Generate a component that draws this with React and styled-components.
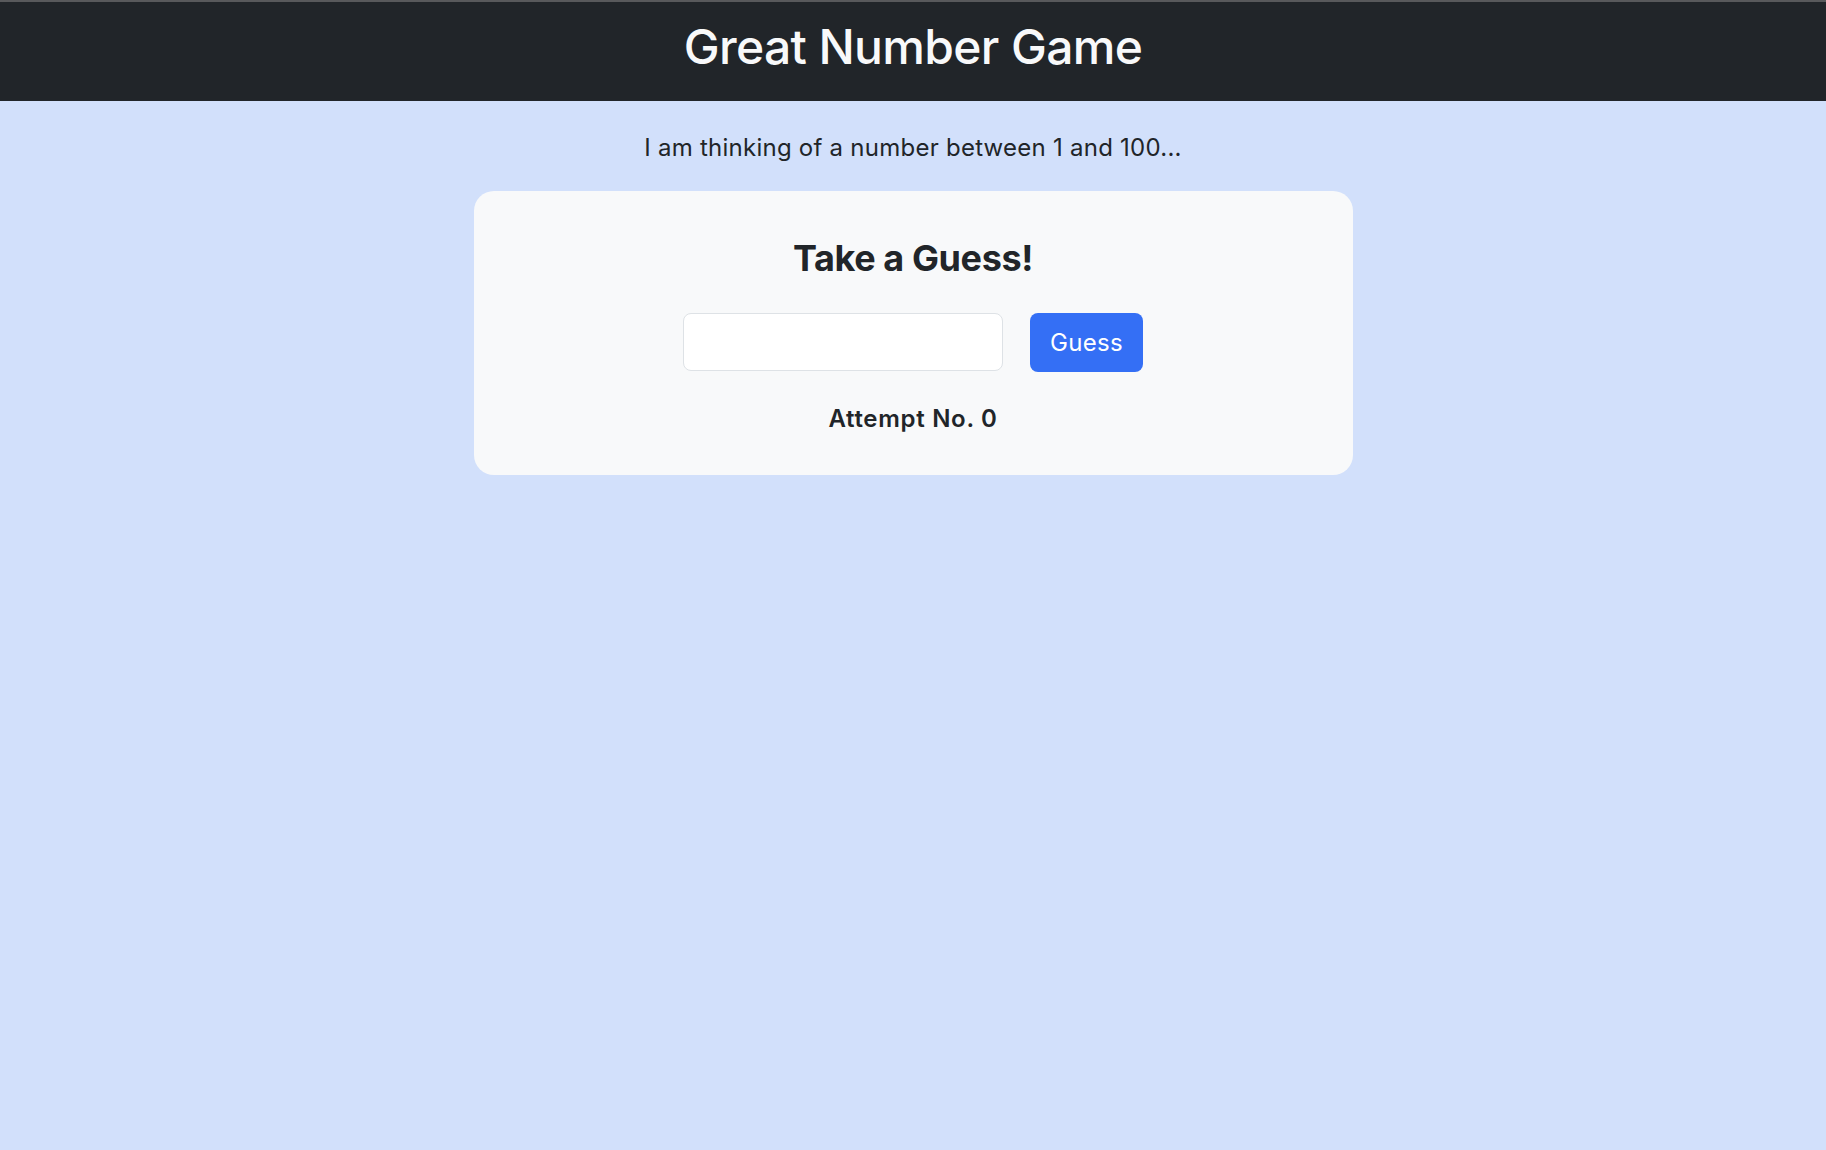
import React, { useState } from 'react'
import styled, { createGlobalStyle } from 'styled-components'

const GlobalStyle = createGlobalStyle`
  html, body {
    margin: 0;
    padding: 0;
    background: #d2e0fb;
    font-family: Inter, "Noto Sans", "Liberation Sans", sans-serif;
    color: #212529;
  }
  * {
    box-sizing: border-box;
  }
`

const Page = styled.div`
  min-height: 1150px;
  background: #d2e0fb;
  display: flex;
  flex-direction: column;
  align-items: center;
`

const Header = styled.header`
  align-self: stretch;
  height: 101px;
  background: #212529;
  border-top: 2px solid #58595b;
  padding-top: 16px;
  text-align: center;
`

const Title = styled.h1`
  margin: 0;
  font-size: 48px;
  line-height: 58px;
  font-weight: 500;
  color: #f8f9fa;
  letter-spacing: -0.65px;
`

const Lead = styled.p`
  margin: 32px 0 29px;
  font-size: 24px;
  line-height: 29px;
  font-weight: 400;
  letter-spacing: 0.25px;
`

const Card = styled.section`
  width: 879px;
  background: #f8f9fa;
  border-radius: 20px;
  padding: 46px 0 42px;
  display: flex;
  flex-direction: column;
  align-items: center;
`

const CardTitle = styled.h2`
  margin: 0 0 33px;
  font-size: 36px;
  line-height: 43px;
  font-weight: 700;
  letter-spacing: -0.4px;
`

const GuessForm = styled.form`
  display: flex;
  gap: 27px;
  margin: 0 0 32px;
`

const GuessInput = styled.input`
  width: 320px;
  height: 58px;
  border: 1px solid #dee2e6;
  border-radius: 8px;
  background: #fff;
  font-family: inherit;
  font-size: 24px;
  padding: 0 18px;
  outline: none;
`

const GuessButton = styled.button`
  width: 113px;
  height: 59px;
  border: none;
  border-radius: 8px;
  background: #346ff5;
  color: #fff;
  font-family: inherit;
  font-size: 24px;
  font-weight: 400;
  letter-spacing: 0.3px;
  cursor: pointer;
`

const Attempt = styled.h3`
  margin: 0;
  font-size: 24px;
  line-height: 29px;
  font-weight: 600;
  letter-spacing: 0.7px;
`

export default function App() {
  const [value, setValue] = useState('')
  const [attempts, setAttempts] = useState(0)

  const onSubmit = (e) => {
    e.preventDefault()
    setAttempts(attempts + 1)
  }

  return (
    <Page>
      <GlobalStyle />
      <Header>
        <Title>Great Number Game</Title>
      </Header>
      <Lead>I am thinking of a number between 1 and 100...</Lead>
      <Card>
        <CardTitle>Take a Guess!</CardTitle>
        <GuessForm onSubmit={onSubmit}>
          <GuessInput type="text" value={value} onChange={(e) => setValue(e.target.value)} />
          <GuessButton type="submit">Guess</GuessButton>
        </GuessForm>
        <Attempt>Attempt No. {attempts}</Attempt>
      </Card>
    </Page>
  )
}
